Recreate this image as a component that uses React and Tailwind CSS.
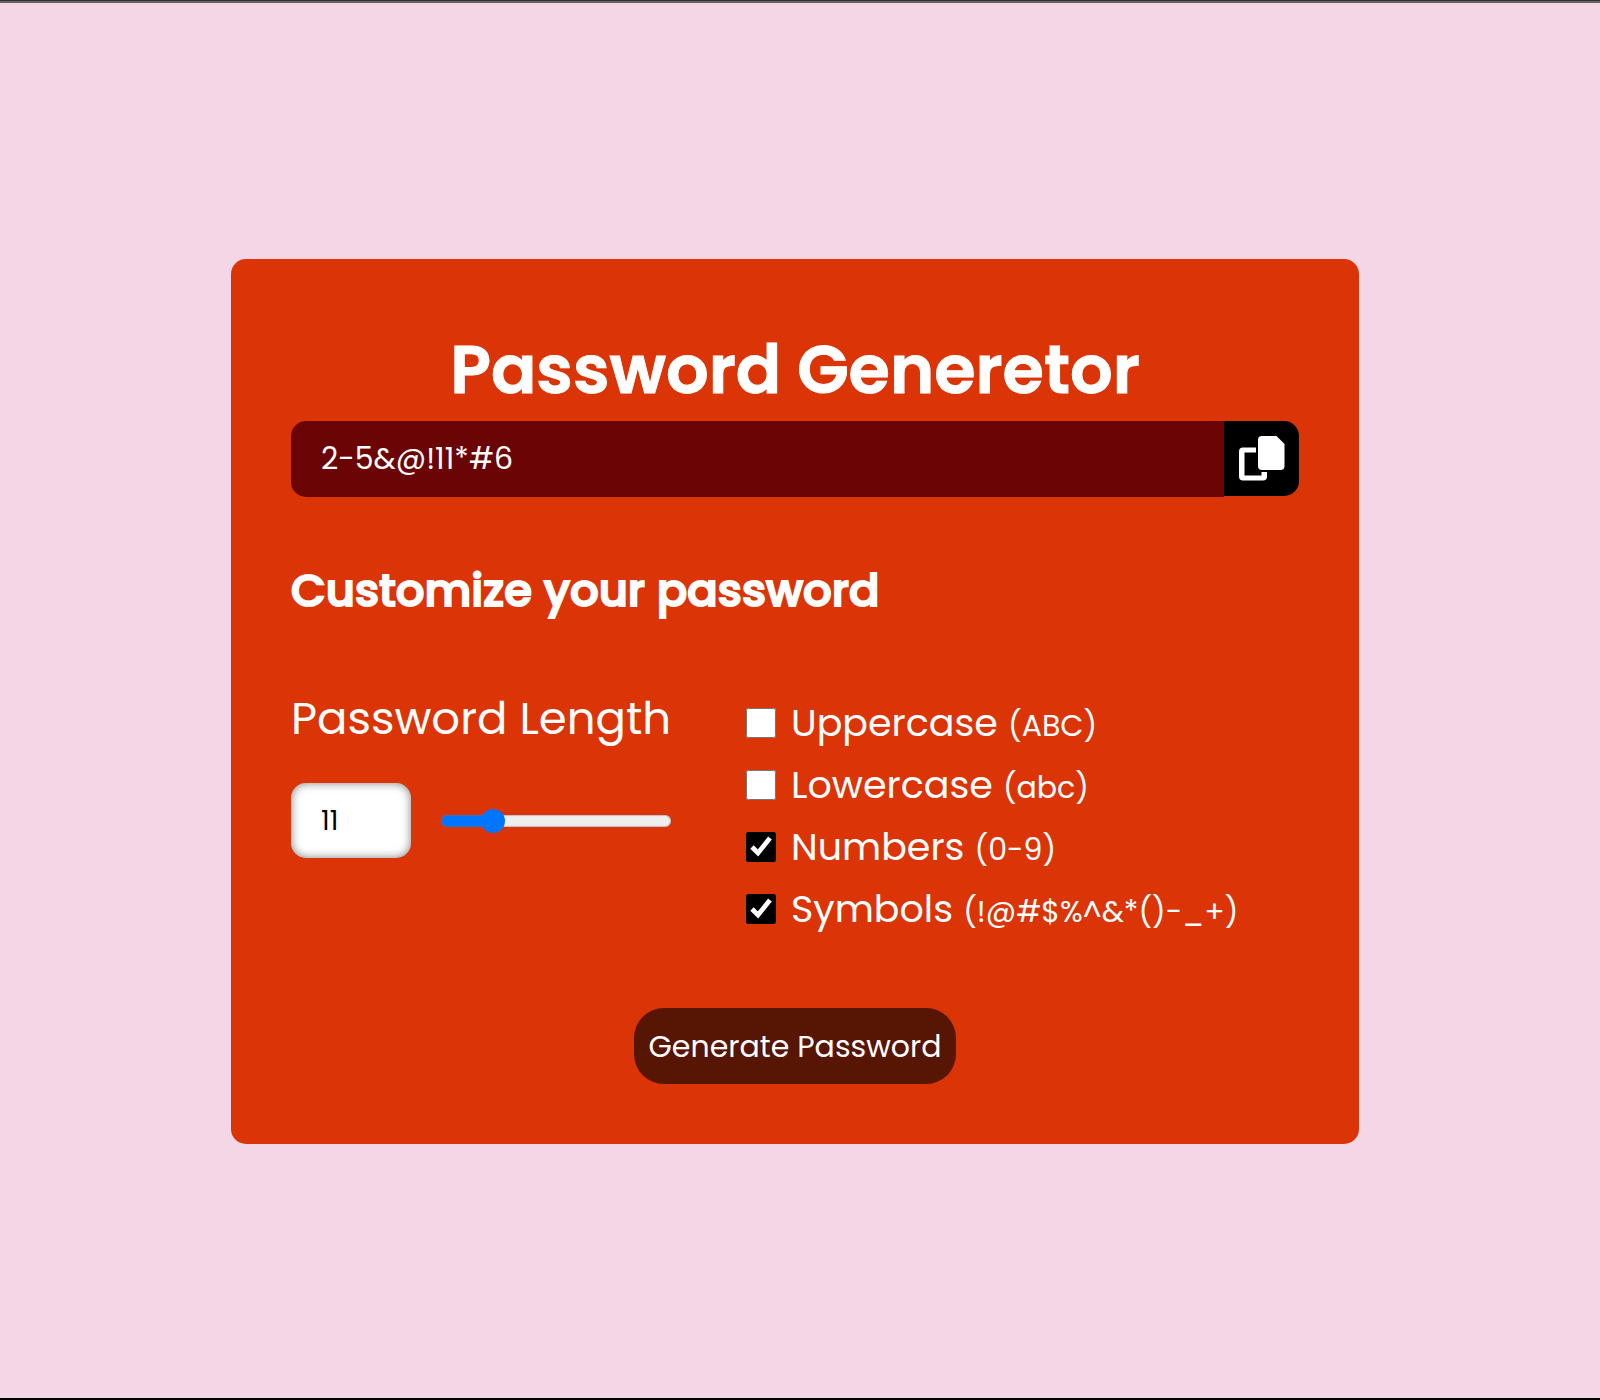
import { useState } from "react";

const OPTIONS = [
  { id: "uppercase", label: "Uppercase", hint: "(ABC)", on: false },
  { id: "lowercase", label: "Lowercase", hint: "(abc)", on: false },
  { id: "numbers", label: "Numbers", hint: "(0-9)", on: true },
  { id: "symbols", label: "Symbols", hint: "(!@#$%^&*()-_+)", on: true },
];

const MIN = 4;
const MAX = 40;

function CopyIcon() {
  return (
    <svg viewBox="0 0 46 46" className="h-[46px] w-[46px]" fill="currentColor" aria-hidden="true">
      <path d="M23 0h14.500l8 8v22a4 4 0 0 1-4 4H23a4 4 0 0 1-4-4V4a4 4 0 0 1 4-4z" />
      <path d="M4 11.500h13v5H5.500v23h17v-3.500h5.500v4.500a4 4 0 0 1-4 4H4a4 4 0 0 1-4-4v-25a4 4 0 0 1 4-4z" />
    </svg>
  );
}

function LengthSlider({ value, onChange }) {
  const share = (value - MIN) / (MAX - MIN);
  const stop = `calc(12px + (100% - 24px) * ${share})`;
  return (
    <input
      type="range"
      aria-label="Password length"
      min={MIN}
      max={MAX}
      value={value}
      onChange={(e) => onChange(Number(e.target.value))}
      style={{ backgroundImage: `linear-gradient(to right, #0075ff ${stop}, #efefef ${stop})` }}
      className="h-3 min-w-0 flex-1 appearance-none rounded-full shadow-[inset_0_0_1px_1px_rgba(120,120,120,0.4)] [&::-webkit-slider-thumb]:h-6 [&::-webkit-slider-thumb]:w-6 [&::-webkit-slider-thumb]:appearance-none [&::-webkit-slider-thumb]:rounded-full [&::-webkit-slider-thumb]:bg-[#0075ff]"
    />
  );
}

export default function App() {
  const [length, setLength] = useState(11);
  return (
    <div className="flex min-h-screen flex-col border-b-2 border-b-black bg-[#f4d6e6] font-[Poppins,Inter,sans-serif] text-white">
      <div className="h-[3px] border-t border-t-[#333333] bg-[#666363]" />
      <div className="flex flex-1 items-center justify-center pt-[2px] pr-[10px]">
        <main className="w-full max-w-[1128px] rounded-[15px] bg-[#db3407] p-[60px]">
          <h1 className="text-center text-[67px] leading-[102px] font-semibold [-webkit-text-stroke:1px_white]">Password Generetor</h1>
          <div className="flex items-start">
            <input
              type="text"
              readOnly
              aria-label="Generated password"
              value="2-5&@!11*#6"
              className="h-[76px] min-w-0 flex-1 rounded-l-[15px] bg-[#6b0404] px-[30px] text-[30px] outline-none"
            />
            <button type="button" aria-label="Copy password" className="flex h-[75px] w-[75px] items-center justify-center rounded-r-[15px] bg-black">
              <CopyIcon />
            </button>
          </div>
          <h2 className="mt-[60px] text-[45px] leading-[68px] font-medium [-webkit-text-stroke:2px_white]">Customize your password</h2>
          <div className="mt-[60px] grid grid-cols-[380px_1fr] gap-x-[75px]">
            <section>
              <label htmlFor="length" className="block text-[45px] leading-[68px] whitespace-nowrap">
                Password Length
              </label>
              <div className="mt-[30px] flex items-center gap-[30px]">
                <input
                  id="length"
                  type="text"
                  inputMode="numeric"
                  value={length}
                  onChange={(e) => setLength(Number(e.target.value) || MIN)}
                  className="h-[75px] w-[120px] rounded-[15px] bg-white px-[30px] text-[27px] text-black shadow-[inset_0_0_10px_rgba(0,0,0,0.5)] outline-none"
                />
                <LengthSlider value={length} onChange={setLength} />
              </div>
            </section>
            <fieldset className="flex flex-col gap-[6px] pt-[10px]">
              {OPTIONS.map((o) => (
                <div key={o.id} className="flex items-center gap-[15px] leading-[56px]">
                  <input id={o.id} type="checkbox" defaultChecked={o.on} className="h-[30px] w-[30px] accent-black" />
                  <label htmlFor={o.id} className="text-[38px] whitespace-nowrap">
                    {o.label} <span className="text-[30px] leading-none">{o.hint}</span>
                  </label>
                </div>
              ))}
            </fieldset>
          </div>
          <div className="mt-[71px] flex justify-center">
            <button type="button" className="h-[76px] rounded-[30px] bg-[#571503] px-[15px] text-[30px]">
              Generate Password
            </button>
          </div>
        </main>
      </div>
    </div>
  );
}
